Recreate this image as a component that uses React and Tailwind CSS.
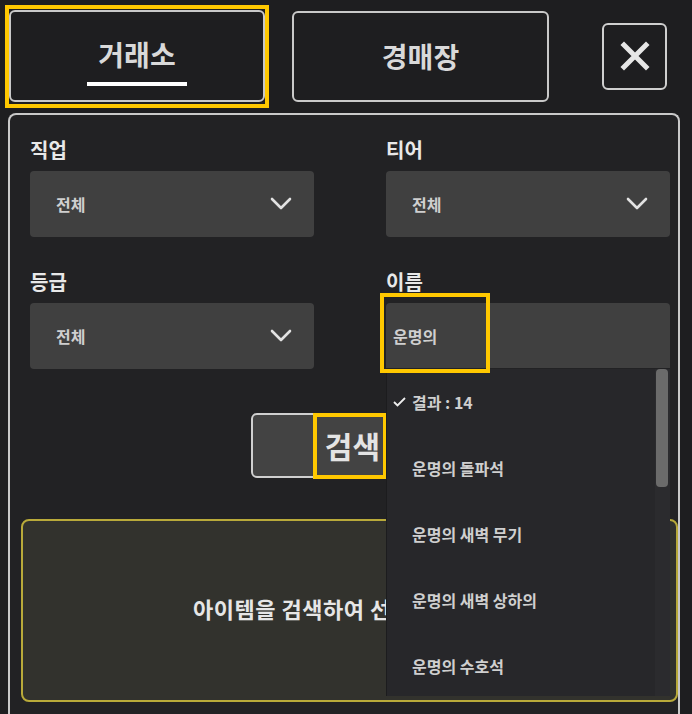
import React from "react";

const font = { fontFamily: '"Noto Sans CJK KR", "Noto Sans", sans-serif' };

function Chevron() {
  return (
    <svg width="22" height="14" viewBox="0 0 22 14" fill="none">
      <path d="M2 2l9 9 9-9" stroke="#e2e2e2" strokeWidth="2.6" strokeLinecap="round" strokeLinejoin="round" />
    </svg>
  );
}

function Select({ label, value }) {
  return (
    <div className="flex flex-col">
      <div className="text-[20px] leading-[28px] font-bold text-[#e8e8e8] mb-[7px]">{label}</div>
      <div className="h-[66px] rounded-[4px] bg-[#404040] flex items-center justify-between pl-[26px] pr-[22px]">
        <span className="text-[16px] font-bold text-[#cfcfcf]">{value}</span>
        <Chevron />
      </div>
    </div>
  );
}

export default function App() {
  const results = ["운명의 돌파석", "운명의 새벽 무기", "운명의 새벽 상하의", "운명의 수호석"];

  return (
    <div className="relative w-[692px] h-[714px] overflow-hidden bg-[#1e1e20]" style={font}>
      {/* tabs */}
      <div className="flex items-center pl-[9px] pt-[10px]">
        <div className="relative">
          <button className="w-[256px] h-[92px] rounded-md border-2 border-[#c9c9c9] bg-[#1e1e20] flex flex-col items-center justify-center">
            <span className="text-[28px] font-bold text-[#d9d9d9] leading-[36px] mt-[10px]">거래소</span>
            <span className="block w-[100px] h-[4px] bg-white mt-[10px]" />
          </button>
          <div className="absolute left-[-4px] top-[-5px] w-[264px] h-[103px] border-4 border-[#ffc800] pointer-events-none" />
        </div>
        <button className="ml-[27px] w-[257px] h-[91px] rounded-md border-2 border-[#c9c9c9] flex items-center justify-center">
          <span className="text-[28px] font-bold text-[#d9d9d9]">경매장</span>
        </button>
        <button className="ml-[53px] w-[65px] h-[67px] rounded-md border-2 border-[#cfcfcf] flex items-center justify-center">
          <svg width="30" height="30" viewBox="0 0 30 30">
            <path d="M4 4l22 22M26 4L4 26" stroke="#e6e6e6" strokeWidth="5" strokeLinecap="square" />
          </svg>
        </button>
      </div>

      {/* panel */}
      <div className="mt-[11px] ml-[8px] w-[672px] h-[620px] border-2 border-b-0 border-[#c9c9c9] rounded-t-lg bg-[#222224]">
        <div className="grid grid-cols-[284px_284px] gap-x-[72px] gap-y-[31px] pl-[20px] pt-[21px]">
          <Select label="직업" value="전체" />
          <Select label="티어" value="전체" />
          <Select label="등급" value="전체" />
          <div className="relative flex flex-col">
            <div className="text-[20px] leading-[28px] font-bold text-[#e8e8e8] mb-[7px]">이름</div>
            <div className="h-[65px] rounded-t-[4px] bg-[#404040] flex items-center pl-[7px]">
              <span className="text-[16px] font-bold text-[#cfcfcf]">운명의</span>
            </div>
            <div className="absolute left-[-6px] top-[25px] w-[110px] h-[80px] border-4 border-[#ffc800] pointer-events-none z-20" />

            {/* dropdown */}
            <div className="absolute left-0 top-full w-[284px] h-[327px] overflow-hidden bg-[#27272a] border-l border-[#1c1c1e] z-10 flex">
              <div className="flex-1">
                <div className="h-[66px] flex items-center pl-[6px]">
                  <svg width="13" height="10" viewBox="0 0 13 10" fill="none">
                    <path d="M1 5l3.5 3.5L12 1" stroke="#eeeeee" strokeWidth="1.8" />
                  </svg>
                  <span className="ml-[6px] text-[16px] font-bold text-[#cfcfcf]">결과 : 14</span>
                </div>
                {results.map((r) => (
                  <div key={r} className="h-[66px] flex items-center pl-[25px]">
                    <span className="text-[16px] font-bold text-[#cfcfcf]">{r}</span>
                  </div>
                ))}
              </div>
              <div className="w-[15px] bg-[#2b2b2e] pl-[1px]">
                <div className="w-[12px] h-[118px] rounded-[4px] bg-[#6b6b6b]" />
              </div>
            </div>
          </div>
        </div>

        {/* search toggle */}
        <div className="relative ml-[241px] mt-[44px] w-[135px] h-[65px] rounded-md border-2 border-[#d0d0d0] bg-[#434343] flex items-center justify-end pr-[4px]">
          <span className="text-[30px] font-bold text-[#e4e4e4]">검색</span>
          <div className="absolute left-[60px] top-[-2px] w-[74px] h-[66px] border-4 border-[#ffc800] pointer-events-none" />
        </div>

        {/* empty state */}
        <div className="ml-[11px] mt-[41px] w-[657px] h-[183px] rounded-lg border-2 border-[#b9aa3a] bg-[#32322d] flex items-center pl-[170px] pb-[4px]">
          <span className="text-[22px] tracking-[0.5px] font-bold text-[#e6e6e6] whitespace-nowrap">아이템을 검색하여 선택해 주세요</span>
        </div>
      </div>
    </div>
  );
}
